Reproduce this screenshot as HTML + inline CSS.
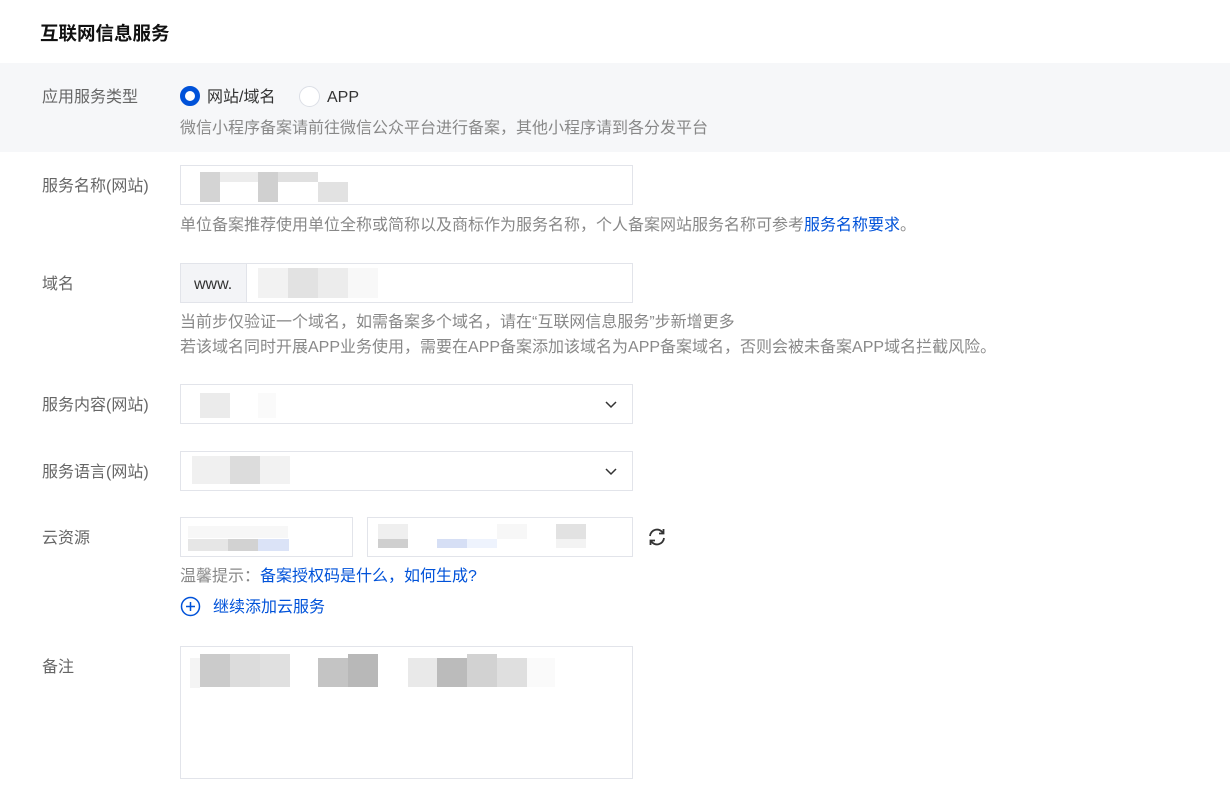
<!DOCTYPE html>
<html><head><meta charset="utf-8"><style>
*{margin:0;padding:0;box-sizing:border-box}
body{width:1230px;height:802px;background:#fff;font-family:"Liberation Sans","Noto Sans CJK SC",sans-serif;font-size:16px;color:#333;position:relative;overflow:hidden}
.a{position:absolute;white-space:nowrap;line-height:20px;margin-top:2px}
.lbl{color:#666}
.hint{color:#888}
.box{position:absolute;border:1px solid #e2e4ea;background:#fff}
.b{position:absolute}
a{color:#0052d9;text-decoration:none}
</style></head><body>
<div class="a" style="left:40px;top:22px;font-size:18.5px;font-weight:bold;color:#111">互联网信息服务</div>
<div style="position:absolute;left:0;top:63px;width:1230px;height:89px;background:#f6f7f9"></div>
<div class="a lbl" style="left:42px;top:86px">应用服务类型</div>
<div class="b" style="left:180px;top:86px;width:20px;height:20px;border-radius:50%;border:5px solid #0052d9;background:#fff"></div>
<div class="a" style="left:207px;top:86px">网站/域名</div>
<div class="b" style="left:299px;top:86px;width:21px;height:21px;border-radius:50%;border:1px solid #dcdfe6;background:#fff"></div>
<div class="a" style="left:327px;top:86px">APP</div>
<div class="a hint" style="left:180px;top:117px">微信小程序备案请前往微信公众平台进行备案，其他小程序请到各分发平台</div>

<div class="a lbl" style="left:42px;top:175px">服务名称(网站)</div>
<div class="box" style="left:180px;top:165px;width:453px;height:40px"></div>
<div class="b" style="left:200px;top:172px;width:20px;height:30px;background:#d4d4d4"></div>
<div class="b" style="left:220px;top:172px;width:38px;height:10px;background:#ececec"></div>
<div class="b" style="left:258px;top:172px;width:20px;height:30px;background:#d0d0d0"></div>
<div class="b" style="left:278px;top:172px;width:40px;height:10px;background:#e0e0e0"></div>
<div class="b" style="left:318px;top:182px;width:30px;height:20px;background:#e2e2e2"></div>
<div class="a hint" style="left:180px;top:214px">单位备案推荐使用单位全称或简称以及商标作为服务名称，个人备案网站服务名称可参考<a>服务名称要求</a>。</div>

<div class="a lbl" style="left:42px;top:273px">域名</div>
<div class="box" style="left:180px;top:263px;width:453px;height:40px"></div>
<div class="b" style="left:181px;top:264px;width:66px;height:38px;background:#f3f4f7;border-right:1px solid #e2e4ea"></div>
<div class="a" style="left:194px;top:273px">www.</div>
<div class="b" style="left:258px;top:268px;width:30px;height:30px;background:#f2f2f2"></div>
<div class="b" style="left:288px;top:268px;width:30px;height:30px;background:#e2e2e2"></div>
<div class="b" style="left:318px;top:268px;width:30px;height:30px;background:#ececec"></div>
<div class="b" style="left:348px;top:268px;width:30px;height:30px;background:#f8f8f8"></div>
<div class="a hint" style="left:180px;top:311px">当前步仅验证一个域名，如需备案多个域名，请在“互联网信息服务”步新增更多</div>
<div class="a hint" style="left:180px;top:336px">若该域名同时开展APP业务使用，需要在APP备案添加该域名为APP备案域名，否则会被未备案APP域名拦截风险。</div>

<div class="a lbl" style="left:42px;top:394px">服务内容(网站)</div>
<div class="box" style="left:180px;top:384px;width:453px;height:40px"></div>
<div class="b" style="left:200px;top:393px;width:30px;height:25px;background:#ebebeb"></div>
<div class="b" style="left:258px;top:393px;width:18px;height:25px;background:#fafafa"></div>
<svg class="b" style="left:604px;top:397px" width="14" height="14" viewBox="0 0 14 14"><path d="M2 5l5 5 5-5" fill="none" stroke="#333" stroke-width="1.5"/></svg>

<div class="a lbl" style="left:42px;top:461px">服务语言(网站)</div>
<div class="box" style="left:180px;top:451px;width:453px;height:40px"></div>
<div class="b" style="left:192px;top:456px;width:38px;height:28px;background:#f0f0f0"></div>
<div class="b" style="left:230px;top:456px;width:30px;height:28px;background:#dcdcdc"></div>
<div class="b" style="left:260px;top:456px;width:30px;height:28px;background:#f2f2f2"></div>
<svg class="b" style="left:604px;top:464px" width="14" height="14" viewBox="0 0 14 14"><path d="M2 5l5 5 5-5" fill="none" stroke="#333" stroke-width="1.5"/></svg>

<div class="a lbl" style="left:42px;top:527px">云资源</div>
<div class="box" style="left:180px;top:517px;width:173px;height:40px"></div>
<div class="b" style="left:188px;top:526px;width:100px;height:12px;background:#f7f7f7"></div>
<div class="b" style="left:188px;top:539px;width:40px;height:12px;background:#e6e6e6"></div>
<div class="b" style="left:228px;top:539px;width:30px;height:12px;background:#d2d2d2"></div>
<div class="b" style="left:258px;top:539px;width:31px;height:12px;background:#dbe3f7"></div>
<div class="box" style="left:367px;top:517px;width:266px;height:40px"></div>
<div class="b" style="left:378px;top:524px;width:30px;height:15px;background:#efefef"></div>
<div class="b" style="left:378px;top:539px;width:30px;height:9px;background:#cfcfcf"></div>
<div class="b" style="left:437px;top:539px;width:30px;height:9px;background:#d6dff5"></div>
<div class="b" style="left:467px;top:539px;width:30px;height:9px;background:#eef3fd"></div>
<div class="b" style="left:497px;top:524px;width:30px;height:15px;background:#f7f7f7"></div>
<div class="b" style="left:556px;top:524px;width:30px;height:15px;background:#e2e2e2"></div>
<div class="b" style="left:556px;top:539px;width:30px;height:9px;background:#f3f3f3"></div>
<svg class="b" style="left:646px;top:526px" width="22" height="22" viewBox="0 0 22 22"><g fill="none" stroke="#333" stroke-width="1.8"><path d="M4 10a7 7 0 0 1 13-3"/><path d="M18 12a7 7 0 0 1-13 3"/><path d="M17.5 3v4.5H13"/><path d="M4.5 19v-4.5H9"/></g></svg>
<div class="a" style="left:180px;top:565px"><span class="hint">温馨提示：</span><a>备案授权码是什么，如何生成?</a></div>
<svg class="b" style="left:180px;top:596px" width="21" height="21" viewBox="0 0 21 21"><circle cx="10.5" cy="10.5" r="9" fill="none" stroke="#0052d9" stroke-width="1.5"/><path d="M10.5 6v9M6 10.5h9" stroke="#0052d9" stroke-width="1.5"/></svg>
<div class="a" style="left:213px;top:596px;color:#0052d9">继续添加云服务</div>

<div class="a lbl" style="left:42px;top:656px">备注</div>
<div class="box" style="left:180px;top:646px;width:453px;height:133px"></div>
<div class="b" style="left:190px;top:658px;width:10px;height:30px;background:#f4f4f4"></div>
<div class="b" style="left:200px;top:654px;width:30px;height:33px;background:#cbcbcb"></div>
<div class="b" style="left:230px;top:654px;width:30px;height:33px;background:#dcdcdc"></div>
<div class="b" style="left:260px;top:654px;width:30px;height:33px;background:#e0e0e0"></div>
<div class="b" style="left:318px;top:658px;width:30px;height:29px;background:#c4c4c4"></div>
<div class="b" style="left:348px;top:654px;width:30px;height:33px;background:#b8b8b8"></div>
<div class="b" style="left:408px;top:658px;width:29px;height:29px;background:#e9e9e9"></div>
<div class="b" style="left:437px;top:658px;width:30px;height:29px;background:#bbbbbb"></div>
<div class="b" style="left:467px;top:654px;width:30px;height:33px;background:#d2d2d2"></div>
<div class="b" style="left:497px;top:658px;width:30px;height:29px;background:#dfdfdf"></div>
<div class="b" style="left:527px;top:658px;width:28px;height:29px;background:#fafafa"></div>
</body></html>
